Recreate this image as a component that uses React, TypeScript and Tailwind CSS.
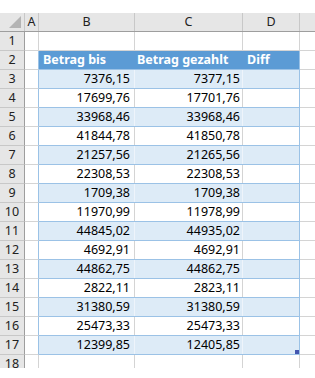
const rows: [string, string][] = [
  ["7376,15", "7377,15"],
  ["17699,76", "17701,76"],
  ["33968,46", "33968,46"],
  ["41844,78", "41850,78"],
  ["21257,56", "21265,56"],
  ["22308,53", "22308,53"],
  ["1709,38", "1709,38"],
  ["11970,99", "11978,99"],
  ["44845,02", "44935,02"],
  ["4692,91", "4692,91"],
  ["44862,75", "44862,75"],
  ["2822,11", "2823,11"],
  ["31380,59", "31380,59"],
  ["25473,33", "25473,33"],
  ["12399,85", "12405,85"],
];

function RowHead({ n }: { n: number }) {
  return (
    <div className="flex h-full w-[25px] shrink-0 items-center justify-center border-r border-b border-r-[#9e9e9e] border-b-[#c8c8c8] bg-[#e6e6e6] text-[#222]">
      {n}
    </div>
  );
}

export default function App() {
  return (
    <div className="h-[378px] w-[315px] bg-white font-['Noto_Sans',sans-serif] text-[12.5px] leading-none text-black">
      <div className="h-[13px]" />
      <div className="h-[355px] overflow-hidden">
        {/* column headers */}
        <div className="flex h-[19px] border-b border-[#9e9e9e] bg-[#e6e6e6] text-[#222]">
          <div className="relative w-[25px] shrink-0 border-r border-[#c8c8c8]">
            <svg className="absolute right-[3px] bottom-[3px]" width="12" height="12" viewBox="0 0 12 12">
              <polygon points="12,0 12,12 0,12" fill="#b4b4b4" />
            </svg>
          </div>
          <div className="flex w-[14px] shrink-0 items-center justify-center border-r border-[#c8c8c8]">A</div>
          <div className="flex w-[96px] shrink-0 items-center justify-center border-r border-[#c8c8c8]">B</div>
          <div className="flex w-[108px] shrink-0 items-center justify-center border-r border-[#c8c8c8]">C</div>
          <div className="flex w-[57px] shrink-0 items-center justify-center border-r border-[#c8c8c8]">D</div>
          <div className="flex-1" />
        </div>

        {/* row 1 */}
        <div className="flex h-[19px]">
          <RowHead n={1} />
          <div className="w-[14px] shrink-0 border-r border-b border-[#d4d4d4]" />
          <div className="w-[96px] shrink-0 border-r border-b border-[#d4d4d4]" />
          <div className="w-[108px] shrink-0 border-r border-b border-[#d4d4d4]" />
          <div className="w-[57px] shrink-0 border-r border-b border-[#d4d4d4]" />
          <div className="flex-1 border-b border-[#d4d4d4]" />
        </div>

        {/* row 2: table header */}
        <div className="flex h-[19px]">
          <RowHead n={2} />
          <div className="w-[14px] shrink-0 border-r border-b border-r-[#9bc2e6] border-b-[#d4d4d4]" />
          <div className="flex w-[261px] shrink-0 border-r border-b border-[#9bc2e6] bg-[#5b9bd5] font-bold text-white">
            <div className="flex w-[96px] items-center pl-[4px]">Betrag bis</div>
            <div className="flex w-[108px] items-center pl-[2px]">Betrag gezahlt</div>
            <div className="flex flex-1 items-center pl-[4px]">Diff</div>
          </div>
          <div className="flex-1 border-b border-[#d4d4d4]" />
        </div>

        {rows.map(([b, c], i) => {
          const band = i % 2 === 0;
          const last = i === rows.length - 1;
          return (
            <div key={i} className="flex h-[19px]">
              <RowHead n={i + 3} />
              <div className="w-[14px] shrink-0 border-r border-b border-r-[#9bc2e6] border-b-[#d4d4d4]" />
              <div className={`relative flex w-[261px] shrink-0 border-r border-b border-[#9bc2e6] ${band ? "bg-[#ddebf7]" : "bg-white"}`}>
                <div className={`flex w-[96px] items-center justify-end border-r pr-[4px] ${band ? "border-[#eef4fb]" : "border-[#d4d4d4]"}`}>{b}</div>
                <div className={`flex w-[108px] items-center justify-end border-r pr-[2px] ${band ? "border-[#eef4fb]" : "border-[#d4d4d4]"}`}>{c}</div>
                <div className="flex-1" />
                {last && <div className="absolute right-0 bottom-0 h-[4px] w-[4px] bg-[#4356b0]" />}
              </div>
              <div className="flex-1 border-b border-[#d4d4d4]" />
            </div>
          );
        })}

        {/* row 18 */}
        <div className="flex h-[19px]">
          <RowHead n={18} />
          <div className="w-[14px] shrink-0 border-r border-[#d4d4d4]" />
          <div className="w-[96px] shrink-0 border-r border-[#d4d4d4]" />
          <div className="w-[108px] shrink-0 border-r border-[#d4d4d4]" />
          <div className="w-[57px] shrink-0 border-r border-[#d4d4d4]" />
          <div className="flex-1" />
        </div>
      </div>
    </div>
  );
}
